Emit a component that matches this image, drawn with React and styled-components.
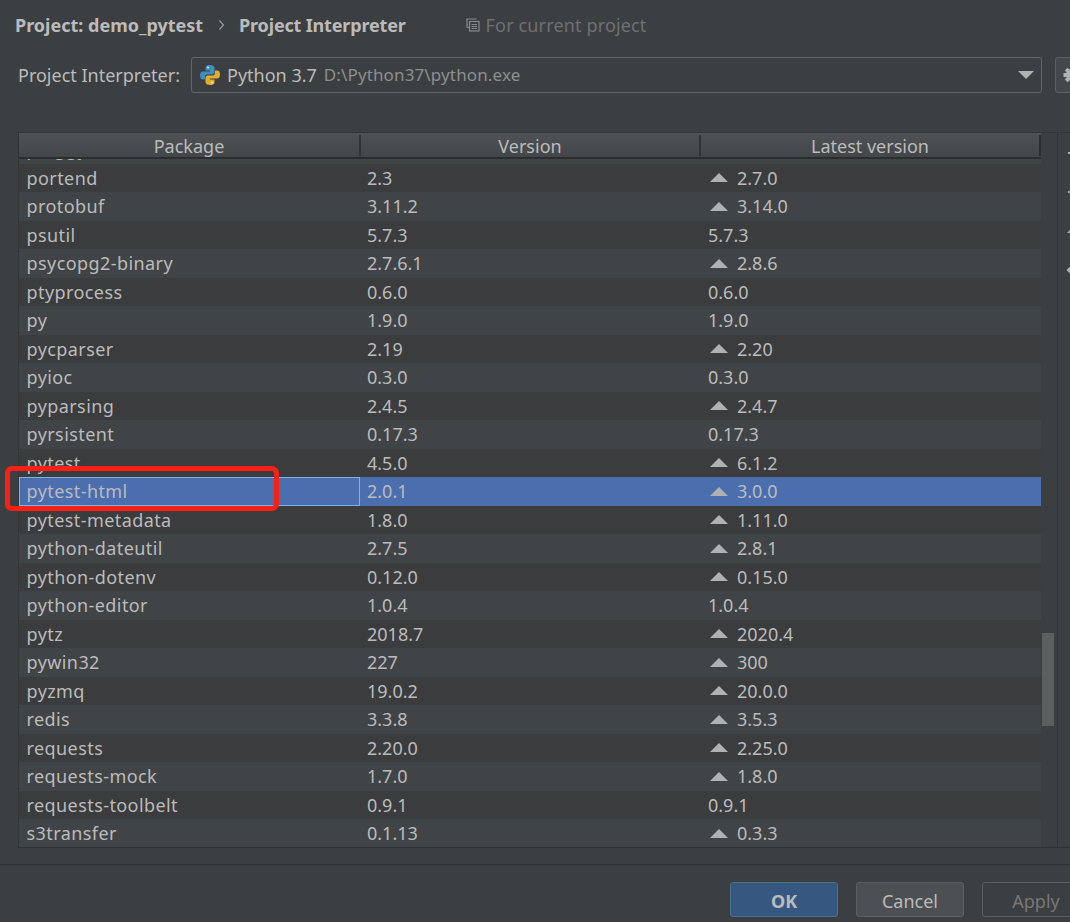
import React from "react";
import styled, { createGlobalStyle } from "styled-components";

const Global = createGlobalStyle`
  html, body { margin: 0; padding: 0; background: #3c3f41; }
  body { width: 1070px; height: 922px; overflow: hidden; font-family: "Noto Sans", "Open Sans", sans-serif; color: #bbbbbb; }
`;

const rows = [
  ["portend", "2.3", "2.7.0", true],
  ["protobuf", "3.11.2", "3.14.0", true],
  ["psutil", "5.7.3", "5.7.3", false],
  ["psycopg2-binary", "2.7.6.1", "2.8.6", true],
  ["ptyprocess", "0.6.0", "0.6.0", false],
  ["py", "1.9.0", "1.9.0", false],
  ["pycparser", "2.19", "2.20", true],
  ["pyioc", "0.3.0", "0.3.0", false],
  ["pyparsing", "2.4.5", "2.4.7", true],
  ["pyrsistent", "0.17.3", "0.17.3", false],
  ["pytest", "4.5.0", "6.1.2", true],
  ["pytest-html", "2.0.1", "3.0.0", true],
  ["pytest-metadata", "1.8.0", "1.11.0", true],
  ["python-dateutil", "2.7.5", "2.8.1", true],
  ["python-dotenv", "0.12.0", "0.15.0", true],
  ["python-editor", "1.0.4", "1.0.4", false],
  ["pytz", "2018.7", "2020.4", true],
  ["pywin32", "227", "300", true],
  ["pyzmq", "19.0.2", "20.0.0", true],
  ["redis", "3.3.8", "3.5.3", true],
  ["requests", "2.20.0", "2.25.0", true],
  ["requests-mock", "1.7.0", "1.8.0", true],
  ["requests-toolbelt", "0.9.1", "0.9.1", false],
  ["s3transfer", "0.1.13", "0.3.3", true],
];

const Page = styled.div`
  position: relative;
  width: 1070px;
  height: 922px;
  overflow: hidden;
  background: #3c3f41;
`;
const Crumbs = styled.div`
  display: flex;
  align-items: center;
  height: 50px;
  padding-left: 15px;
  font-size: 18px;
`;
const CrumbText = styled.span`
  font-weight: 700;
  color: #bbbbbb;
  letter-spacing: ${(p) => p.$tight || 0}px;
`;
const Chevron = styled.svg`
  width: 10px;
  height: 12px;
  margin: 0 13px 0 13px;
`;
const Scope = styled.span`
  display: flex;
  align-items: center;
  gap: 6px;
  margin-left: 60px;
  color: #6e7072;
  letter-spacing: 0.15px;
`;
const PickerRow = styled.div`
  display: flex;
  align-items: center;
  height: 36px;
  margin-top: 7px;
  padding-left: 18px;
  font-size: 18px;
`;
const PickerLabel = styled.span`
  width: 173px;
  flex: none;
`;
const Combo = styled.div`
  display: flex;
  align-items: center;
  width: 851px;
  height: 36px;
  flex: none;
  box-sizing: border-box;
  border: 1px solid #646464;
  border-radius: 3px;
  padding-left: 7px;
`;
const ComboName = styled.span`
  margin-left: 6px;
`;
const ComboPath = styled.span`
  margin-left: 7px;
  margin-top: -1px;
  font-size: 17px;
  letter-spacing: 0.13px;
  color: #8c8e90;
`;
const Caret = styled.svg`
  width: 16px;
  height: 8px;
  margin-left: auto;
  margin-right: 7px;
`;
const GearButton = styled.div`
  display: flex;
  align-items: center;
  width: 40px;
  height: 36px;
  flex: none;
  box-sizing: border-box;
  margin-left: 13px;
  padding-left: 7px;
  border: 1px solid #5e6060;
  border-radius: 3px;
  background: #45484a;
`;
const TableArea = styled.div`
  display: flex;
  box-sizing: border-box;
  margin: 39px 0 0 18px;
  height: 716px;
  border-top: 1px solid #333537;
  border-bottom: 1px solid #2f3133;
`;
const TableBox = styled.div`
  width: 1023px;
  flex: none;
  display: flex;
  flex-direction: column;
`;
const Head = styled.div`
  display: grid;
  grid-template-columns: 342px 340px 340px;
  height: 26px;
  flex: none;
  box-sizing: border-box;
  border-left: 1px solid #2f3133;
  border-bottom: 2px solid #2b2d2e;
  background: linear-gradient(#4f5254, #434648);
`;
const HeadCell = styled.div`
  text-align: center;
  font-size: 18px;
  color: #bbbbbb;
  border-right: 2px solid ${(p) => (p.$last ? "#2b2d2e" : "#313335")};
  box-sizing: border-box;
  margin-top: 2px;
  height: 21px;
  line-height: 23px;
`;
const Body = styled.div`
  height: 688px;
  overflow: hidden;
  box-sizing: border-box;
  border-left: 1px solid #333537;
  background: #3a3c3e;
`;
const Clip = styled.div`
  height: 4.5px;
  overflow: hidden;
`;
const ClipInner = styled.div`
  margin-top: -24px;
`;
const Row = styled.div`
  display: grid;
  grid-template-columns: 341px 341px 340px;
  height: 28.5px;
  align-items: center;
  font-size: 18px;
  color: #bbbbbb;
  background: ${(p) => (p.$selected ? "#4b6eaf" : p.$odd ? "#414446" : "#3a3c3e")};
`;
const NameCell = styled.div`
  display: flex;
  align-items: center;
  height: 100%;
  box-sizing: border-box;
  padding-left: 7.5px;
  white-space: nowrap;
  letter-spacing: 0.42px;
  ${(p) => p.$focus && "border: 1px solid #75b4ec; padding-left: 6.5px;"}
`;
const Cell = styled.div`
  display: flex;
  align-items: center;
  height: 100%;
  box-sizing: border-box;
  padding-left: 7px;
  white-space: nowrap;
`;
const UpArrow = styled.svg`
  width: 18px;
  height: 9px;
  margin: 0 9px 0 2px;
  flex: none;
`;
const ScrollCol = styled.div`
  width: 16px;
  flex: none;
  background: #3c3f41;
  position: relative;
`;
const Thumb = styled.div`
  position: absolute;
  left: 1px;
  top: 500px;
  width: 12px;
  height: 93px;
  background: #5b5f60;
`;
const Side = styled.div`
  flex: 1;
  border-left: 1px solid #2f3133;
  display: flex;
  flex-direction: column;
  padding: 13px 0 0 8px;
  gap: 25px;
`;
const SideIcon = styled.svg`
  width: 14px;
  height: 14px;
  flex: none;
`;
const Footer = styled.div`
  display: flex;
  gap: 18px;
  margin-top: 16px;
  border-top: 1px solid #2f3133;
  padding: 17px 0 0 730px;
`;
const Button = styled.div`
  flex: none;
  width: 108px;
  height: 35px;
  box-sizing: border-box;
  border-radius: 3px;
  border: 1px solid ${(p) => (p.$primary ? "#4c708c" : "#5e6060")};
  background: ${(p) => (p.$primary ? "#365880" : p.$ghost ? "transparent" : "#4c5052")};
  color: ${(p) => (p.$ghost ? "#777777" : "#bbbbbb")};
  font-weight: ${(p) => (p.$primary ? 700 : 400)};
  font-size: 18px;
  line-height: 36px;
  text-align: center;
`;
const Marker = styled.div`
  position: absolute;
  left: 5px;
  top: 466px;
  width: 274px;
  height: 45px;
  box-sizing: border-box;
  border: 5px solid #fb1f16;
  border-radius: 7px;
`;

const Up = () => (
  <UpArrow viewBox="0 0 18 9"><path d="M9 0 L18 9 H0 Z" fill="#afb1b3" /></UpArrow>
);

export default function App() {
  return (
    <Page>
      <Global />
      <Crumbs>
        <CrumbText>Project: demo_pytest</CrumbText>
        <Chevron viewBox="0 0 10 12"><path d="M3.500 1.500 L7.500 6 L3.500 10.500" fill="none" stroke="#9a9c9e" strokeWidth="1.2" /></Chevron>
        <CrumbText $tight={-0.17}>Project Interpreter</CrumbText>
        <Scope>
          <svg width="14" height="14" viewBox="0 0 14 14" fill="none" stroke="#85888a" strokeWidth="1.2">
            <path d="M10.500 1 H1 V9.500 H3" />
            <rect x="3.500" y="3.500" width="9.500" height="9.500" />
            <path d="M5.500 6.500 H11 M5.500 8.500 H11 M5.500 10.500 H11" />
          </svg>
          For current project
        </Scope>
      </Crumbs>
      <PickerRow>
        <PickerLabel>Project Interpreter:</PickerLabel>
        <Combo>
          <svg width="22" height="22" viewBox="0 0 22 22">
            <path d="M10.800 1C7 1 6.500 2.600 6.500 4V6.500H11V7.500H4C2 7.500 1 9 1 11.500C1 14 2 15.500 4 15.500H6V13C6 11 7.500 10.500 9 10.500H13C14.500 10.500 15.500 9.500 15.500 8V4C15.500 2 13.500 1 10.800 1Z" fill="#3d8fbd" />
            <path d="M11.200 21C15 21 15.500 19.400 15.500 18V15.500H11V14.500H18C20 14.500 21 13 21 10.500C21 8 20 6.500 18 6.500H16V9C16 11 14.500 11.500 13 11.500H9C7.500 11.500 6.500 12.500 6.500 14V18C6.500 20 8.500 21 11.200 21Z" fill="#e0ae2a" />
            <circle cx="9" cy="3.600" r="1" fill="#dfeaf0" />
            <circle cx="13" cy="18.400" r="1" fill="#fff3c8" />
          </svg>
          <ComboName>Python 3.7</ComboName>
          <ComboPath>D:\Python37\python.exe</ComboPath>
          <Caret viewBox="0 0 16 8"><path d="M0 0 H16 L8 8 Z" fill="#afb1b3" /></Caret>
        </Combo>
        <GearButton>
          <svg width="18" height="18" viewBox="0 0 18 18">
            <circle cx="9" cy="9" r="6" fill="#afb1b3" />
            <path d="M7 0.500H11V4H7Z M7 14H11V17.500H7Z M0.500 7H4V11H0.500Z M14 7H17.500V11H14Z M1.800 4.600L4.600 1.800L7 4.200L4.200 7Z M1.800 13.400L4.600 16.200L7 13.800L4.200 11Z" fill="#afb1b3" />
          </svg>
        </GearButton>
      </PickerRow>
      <TableArea>
        <TableBox>
          <Head>
            <HeadCell>Package</HeadCell>
            <HeadCell>Version</HeadCell>
            <HeadCell $last>Latest version</HeadCell>
          </Head>
          <Body>
            <Clip>
              <ClipInner>
                <Row $odd>
                  <NameCell>pluggy</NameCell>
                </Row>
              </ClipInner>
            </Clip>
            {rows.map((r, i) => (
              <Row key={r[0]} $odd={i % 2 === 1} $selected={r[0] === "pytest-html"}>
                <NameCell $focus={r[0] === "pytest-html"}>{r[0]}</NameCell>
                <Cell>{r[1]}</Cell>
                <Cell>{r[3] && <Up />}{r[2]}</Cell>
              </Row>
            ))}
          </Body>
        </TableBox>
        <ScrollCol><Thumb /></ScrollCol>
        <Side>
          <SideIcon viewBox="0 0 14 14"><path d="M2 7 H6" stroke="#afb1b3" strokeWidth="2" /></SideIcon>
          <SideIcon viewBox="0 0 14 14"><path d="M2 7 H6" stroke="#afb1b3" strokeWidth="2" /></SideIcon>
          <SideIcon viewBox="0 0 14 14"><path d="M5 5 L1 9 H5 Z" fill="#afb1b3" /></SideIcon>
          <SideIcon viewBox="0 0 14 14"><path d="M7 0.500L0.500 7L7 13.500H14V0.500Z" fill="#afb1b3" /></SideIcon>
        </Side>
      </TableArea>
      <Footer>
        <Button $primary>OK</Button>
        <Button>Cancel</Button>
        <Button $ghost>Apply</Button>
      </Footer>
      <Marker />
    </Page>
  );
}
